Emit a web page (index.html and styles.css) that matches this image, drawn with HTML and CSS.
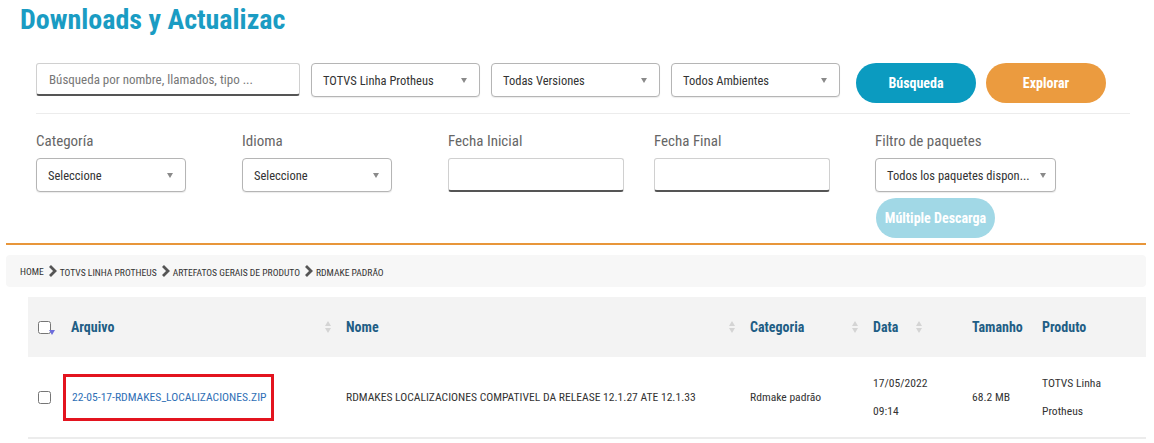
FILE: index.html
```html
<!DOCTYPE html>
<html lang="es">
<head>
    <meta charset="UTF-8">
    <meta name="viewport" content="width=device-width, initial-scale=1.0">
    <title>Downloads y Actualizaciones</title>
    <link rel="stylesheet" href="styles.css">
</head>
<body>
    <h1 class="title">Downloads y Actualizac</h1>

    <div class="toolbar">
        <input class="search-input" type="text" placeholder="Búsqueda por nombre, llamados, tipo ...">
        <div class="select wide"><span>TOTVS Linha Protheus</span><i class="caret"></i></div>
        <div class="select wide"><span>Todas Versiones</span><i class="caret"></i></div>
        <div class="select wide"><span>Todos Ambientes</span><i class="caret"></i></div>
        <button class="btn btn-blue">Búsqueda</button>
        <button class="btn btn-orange">Explorar</button>
    </div>

    <div class="filters">
        <div class="field col-a">
            <label>Categoría</label>
            <div class="select small"><span>Seleccione</span><i class="caret"></i></div>
        </div>
        <div class="field col-a">
            <label>Idioma</label>
            <div class="select small"><span>Seleccione</span><i class="caret"></i></div>
        </div>
        <div class="field col-a">
            <label>Fecha Inicial</label>
            <input class="date-input" type="text">
        </div>
        <div class="field col-b">
            <label>Fecha Final</label>
            <input class="date-input" type="text">
        </div>
        <div class="field">
            <label>Filtro de paquetes</label>
            <div class="select pack"><span>Todos los paquetes dispon...</span><i class="caret"></i></div>
            <button class="btn btn-light">Múltiple Descarga</button>
        </div>
    </div>

    <div class="rule"></div>

    <div class="breadcrumb">
        <span class="crumb home">HOME</span>
        <svg class="chev" width="9" height="12" viewBox="0 0 9 12"><polyline points="2,1 7,6 2,11" fill="none" stroke="#555" stroke-width="2.8"/></svg>
        <span class="crumb">TOTVS LINHA PROTHEUS</span>
        <svg class="chev" width="9" height="12" viewBox="0 0 9 12"><polyline points="2,1 7,6 2,11" fill="none" stroke="#555" stroke-width="2.8"/></svg>
        <span class="crumb">ARTEFATOS GERAIS DE PRODUTO</span>
        <svg class="chev" width="9" height="12" viewBox="0 0 9 12"><polyline points="2,1 7,6 2,11" fill="none" stroke="#555" stroke-width="2.8"/></svg>
        <span class="crumb">RDMAKE PADRÃO</span>
    </div>

    <div class="files">
        <div class="row head">
            <div class="cell cb"><span class="cb-wrap"><input type="checkbox"><i class="cb-menu"></i></span></div>
            <div class="cell">Arquivo<i class="sort"></i></div>
            <div class="cell">Nome<i class="sort"></i></div>
            <div class="cell">Categoria<i class="sort"></i></div>
            <div class="cell">Data<i class="sort sort-data"></i></div>
            <div class="cell">Tamanho</div>
            <div class="cell">Produto</div>
        </div>
        <div class="row item">
            <div class="cell cb"><input type="checkbox"></div>
            <div class="cell file"><a class="file-link" href="#">22-05-17-RDMAKES_LOCALIZACIONES.ZIP</a></div>
            <div class="cell upper">RDMAKES LOCALIZACIONES COMPATIVEL DA RELEASE 12.1.27 ATE 12.1.33</div>
            <div class="cell">Rdmake padrão</div>
            <div class="cell two-line">17/05/2022<br>09:14</div>
            <div class="cell">68.2 MB</div>
            <div class="cell two-line">TOTVS Linha<br>Protheus</div>
        </div>
    </div>
</body>
</html>
```

FILE: styles.css
```css
body {
    font-family: "Roboto Condensed", "Liberation Sans Narrow", "DejaVu Sans Condensed", Roboto, sans-serif;
    margin: 0;
    padding: 0;
    background-color: #ffffff;
    color: #333333;
    width: 1154px;
}
.title {
    margin: 3px 0 0 20px;
    font-size: 28px;
    line-height: 34px;
    font-weight: 700;
    color: #1a9cc3;
}
.toolbar {
    display: flex;
    align-items: flex-start;
    margin: 26px 0 0 36px;
    width: 1094px;
    padding-bottom: 10px;
    border-bottom: 1px solid #ececec;
}
.search-input {
    box-sizing: border-box;
    width: 264px;
    height: 33px;
    margin-right: 11px;
    padding: 0 12px;
    border: 1px solid #d0d0d0;
    border-bottom: 2px solid #555555;
    border-radius: 3px;
    font-family: inherit;
    font-size: 13px;
    outline: none;
}
.search-input::placeholder {
    color: #777777;
}
.select {
    box-sizing: border-box;
    display: flex;
    align-items: center;
    justify-content: space-between;
    height: 34px;
    padding: 0 12px 0 11px;
    border: 1px solid #b5b5b5;
    border-radius: 4px;
    box-shadow: 0 1px 1px rgba(0, 0, 0, 0.08);
    font-size: 12.5px;
    color: #333333;
    background-color: #ffffff;
}
.select.wide {
    width: 169px;
    margin-right: 11px;
}
.select.wide:nth-of-type(3) {
    margin-right: 16px;
}
.select.small {
    width: 150px;
}
.select.pack {
    width: 181px;
    padding-right: 9px;
}
.caret {
    width: 0;
    height: 0;
    border-left: 3.5px solid transparent;
    border-right: 3.5px solid transparent;
    border-top: 5px solid #8a8a8a;
}
.btn {
    height: 40px;
    width: 120px;
    border: none;
    border-radius: 20px;
    font-family: inherit;
    font-size: 14px;
    font-weight: 700;
    color: #ffffff;
    cursor: pointer;
}
.btn-blue {
    background-color: #0b9bc0;
    margin-right: 10px;
}
.btn-orange {
    background-color: #eb9b3f;
}
.btn-light {
    background-color: #a1d8e6;
    margin-top: 6px;
    margin-left: 1px;
    width: 119px;
}
.filters {
    display: flex;
    margin-left: 36px;
    padding-top: 18px;
}
.field {
    display: flex;
    flex-direction: column;
    align-items: flex-start;
}
.field.col-a {
    width: 206px;
}
.field.col-b {
    width: 221px;
}
.field label {
    font-size: 15px;
    line-height: 18px;
    color: #666666;
    margin-bottom: 8px;
}
.date-input {
    box-sizing: border-box;
    width: 176px;
    height: 34px;
    border: 1px solid #d0d0d0;
    border-bottom: 2px solid #555555;
    border-radius: 3px;
    outline: none;
}
.rule {
    margin: 5px 8px 0 6px;
    height: 2px;
    background-color: #e8963a;
}
.breadcrumb {
    display: flex;
    align-items: center;
    height: 32px;
    margin: 10px 8px 0 6px;
    padding-left: 14px;
    background-color: #f7f7f7;
    border-radius: 4px;
}
.crumb {
    font-size: 9.6px;
    color: #333333;
    padding-top: 3px;
}
.crumb.home {
    padding-top: 0;
}
.chev {
    margin: 0 3px 0 4px;
}
.files {
    margin: 10px 8px 0 28px;
}
.row {
    display: grid;
    grid-template-columns: 35px 275px 404px 123px 99px 70px 1fr;
}
.row.head {
    height: 60px;
    background-color: #f3f3f3;
    font-size: 14px;
    font-weight: 700;
    color: #1f5e85;
}
.row.item {
    height: 80px;
    border-bottom: 2px solid #ececec;
    font-size: 11.6px;
    color: #333333;
}
.cell {
    display: flex;
    align-items: center;
    padding-left: 8px;
    padding-right: 7px;
}
.cell.cb {
    padding-left: 10px;
    padding-right: 0;
}
.cell input[type="checkbox"] {
    margin: 0;
    width: 13px;
    height: 13px;
}
.cb-wrap {
    position: relative;
    display: flex;
}
.cb-menu {
    position: absolute;
    right: -4px;
    bottom: -1px;
    width: 0;
    height: 0;
    border-left: 3px solid transparent;
    border-right: 3px solid transparent;
    border-top: 5px solid #6d6ddb;
}
.sort {
    margin-left: auto;
    display: flex;
    flex-direction: column;
    gap: 2px;
}
.sort::before,
.sort::after {
    content: "";
    width: 0;
    height: 0;
    border-left: 3.5px solid transparent;
    border-right: 3.5px solid transparent;
}
.sort::before {
    border-bottom: 5px solid #d4d4d4;
}
.sort::after {
    border-top: 5px solid #d4d4d4;
}
.sort-data {
    margin-left: 0;
    position: relative;
    left: 18px;
}
.cell.file {
    padding-left: 0;
}
.file-link {
    display: inline-block;
    padding: 12px 5px 12px 6px;
    border: 3px solid #e3141f;
    line-height: 17px;
    color: #2f6fb6;
    text-decoration: none;
}
.cell.two-line {
    line-height: 28px;
}
```
